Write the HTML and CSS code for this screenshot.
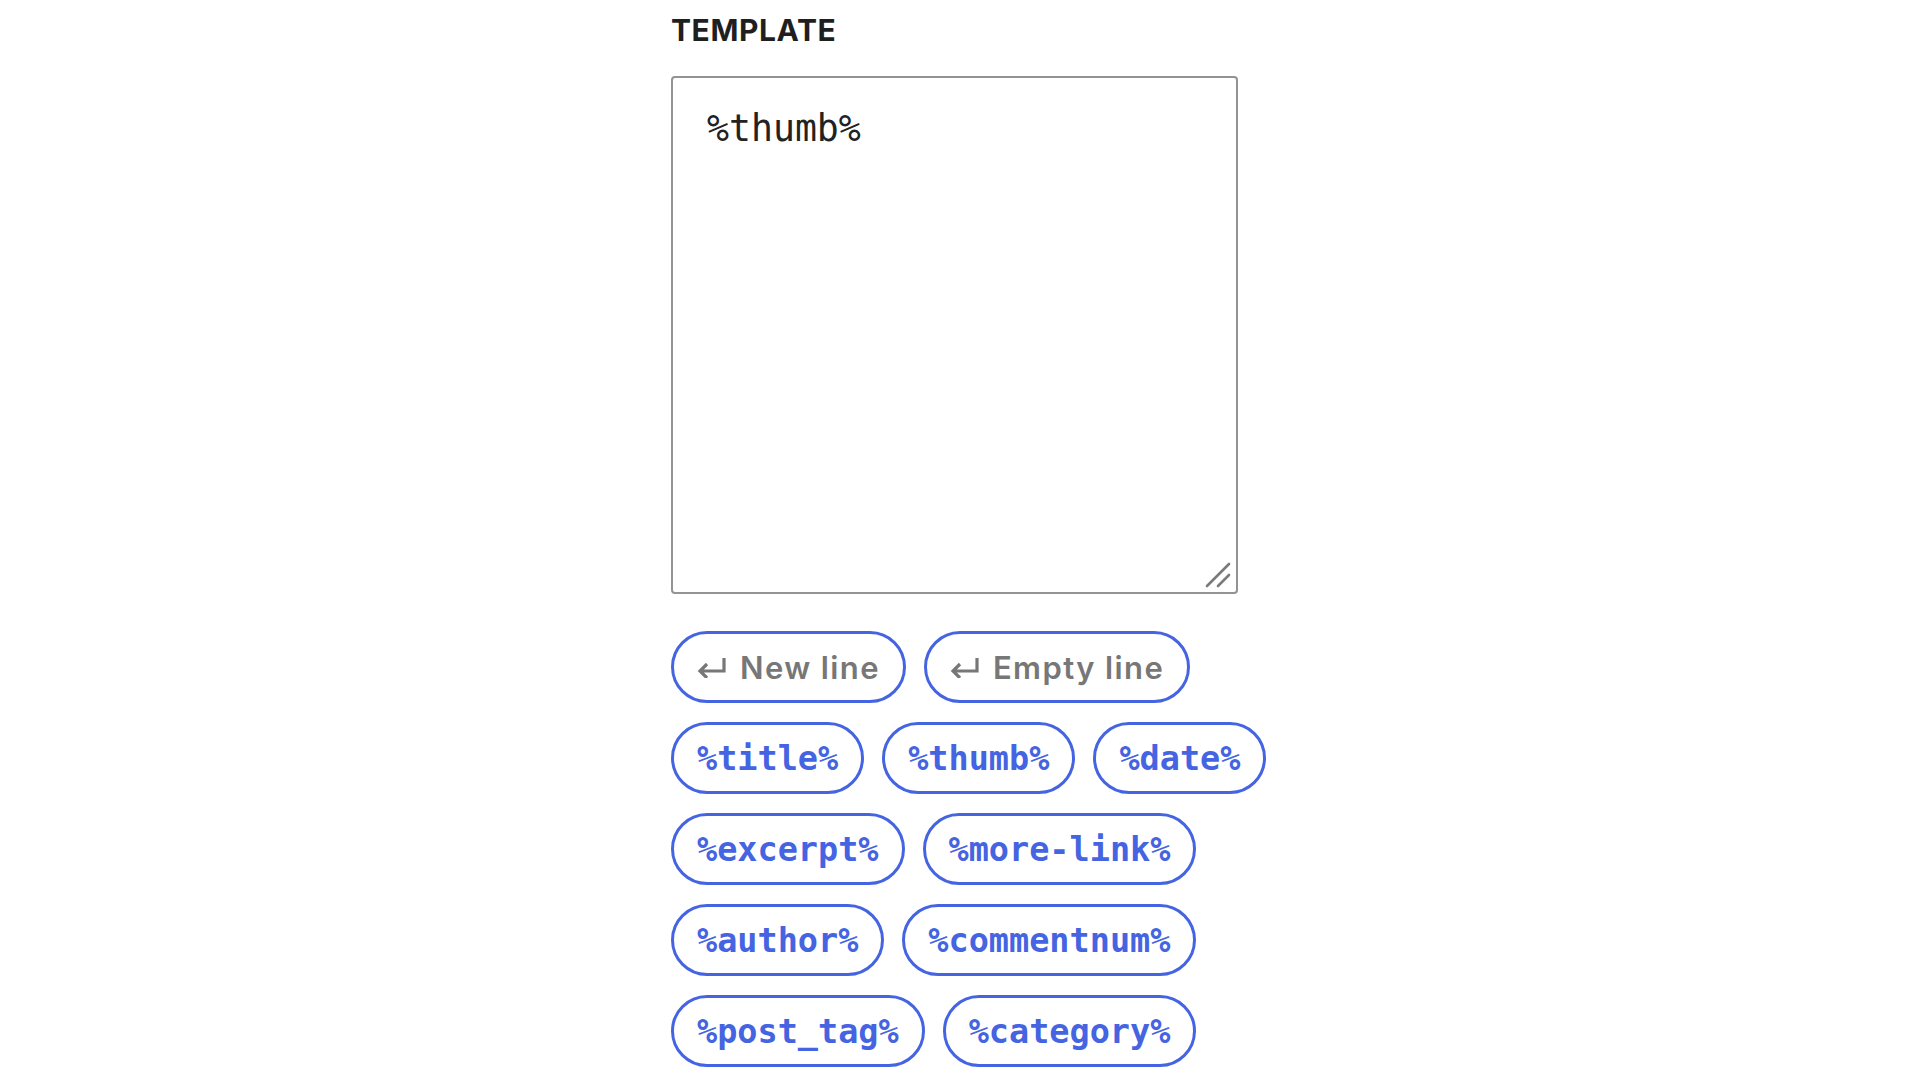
FILE: index.html
```html
<!DOCTYPE html>
<html lang="en">
<head>
<meta charset="utf-8">
<title>Template</title>
<link rel="stylesheet" href="styles.css">
</head>
<body>
<div class="page">
  <div class="panel">
    <div class="label">TEMPLATE</div>
    <div class="editor">
      <textarea class="template-input" spellcheck="false">%thumb%</textarea>
      <svg class="grip" width="26" height="26" viewBox="0 0 26 26" aria-hidden="true">
        <line x1="2" y1="24" x2="24" y2="2" stroke="#7a7a7a" stroke-width="2.6" stroke-linecap="round"/>
        <line x1="13" y1="24" x2="24" y2="13" stroke="#7a7a7a" stroke-width="2.6" stroke-linecap="round"/>
      </svg>
    </div>
    <div class="chips">
      <button class="chip chip-line" type="button">
        <svg class="ret" width="30" height="22" viewBox="0 0 30 22" aria-hidden="true">
          <path d="M27 2 V15 H3 M10 8 L3 15 L10 22" fill="none" stroke="#777" stroke-width="3.2" stroke-linejoin="miter"/>
        </svg>
        <span>New line</span>
      </button>
      <button class="chip chip-line" type="button">
        <svg class="ret" width="30" height="22" viewBox="0 0 30 22" aria-hidden="true">
          <path d="M27 2 V15 H3 M10 8 L3 15 L10 22" fill="none" stroke="#777" stroke-width="3.2" stroke-linejoin="miter"/>
        </svg>
        <span>Empty line</span>
      </button>
      <button class="chip chip-tag" type="button">%title%</button>
      <button class="chip chip-tag" type="button">%thumb%</button>
      <button class="chip chip-tag" type="button">%date%</button>
      <button class="chip chip-tag" type="button">%excerpt%</button>
      <button class="chip chip-tag" type="button">%more-link%</button>
      <button class="chip chip-tag" type="button">%author%</button>
      <button class="chip chip-tag" type="button">%commentnum%</button>
      <button class="chip chip-tag" type="button">%post_tag%</button>
      <button class="chip chip-tag" type="button">%category%</button>
    </div>
  </div>
</div>
</body>
</html>
```

FILE: styles.css
```css
html, body {
  margin: 0;
  padding: 0;
  background: #ffffff;
}

.page {
  padding: 12px 0 0 671px;
}

.panel {
  width: 620px;
  display: flex;
  flex-direction: column;
}

.label {
  font-family: Inter, "Liberation Sans", sans-serif;
  font-weight: 700;
  font-size: 30px;
  letter-spacing: 0.6px;
  color: #1f1f1f;
}

.editor {
  position: relative;
  width: 567px;
  height: 518px;
  margin-top: 28px;
}

.template-input {
  box-sizing: border-box;
  width: 567px;
  height: 518px;
  margin: 0;
  padding: 29px 34px;
  border: 2px solid #939393;
  border-radius: 4px;
  resize: none;
  outline: none;
  font-family: "DejaVu Sans Mono", "Liberation Mono", monospace;
  font-size: 36.5px;
  color: #222222;
  background: #ffffff;
}

.grip {
  position: absolute;
  right: 7px;
  bottom: 6px;
  pointer-events: none;
}

.chips {
  display: flex;
  flex-wrap: wrap;
  gap: 19px 18px;
  margin-top: 37px;
}

.chip {
  box-sizing: border-box;
  height: 72px;
  display: inline-flex;
  align-items: center;
  margin: 0;
  padding: 0 23px;
  border: 3px solid #4564e2;
  border-radius: 36px;
  background: #ffffff;
  cursor: pointer;
}

.chip-line {
  font-family: Inter, "Liberation Sans", sans-serif;
  font-weight: 600;
  font-size: 31px;
  letter-spacing: 1.4px;
  color: #777777;
  gap: 13px;
}

.ret {
  display: block;
  flex: none;
}

.chip-tag {
  font-family: "DejaVu Sans Mono", "Liberation Mono", monospace;
  font-weight: 700;
  font-size: 33.5px;
  color: #4564e2;
}
```
